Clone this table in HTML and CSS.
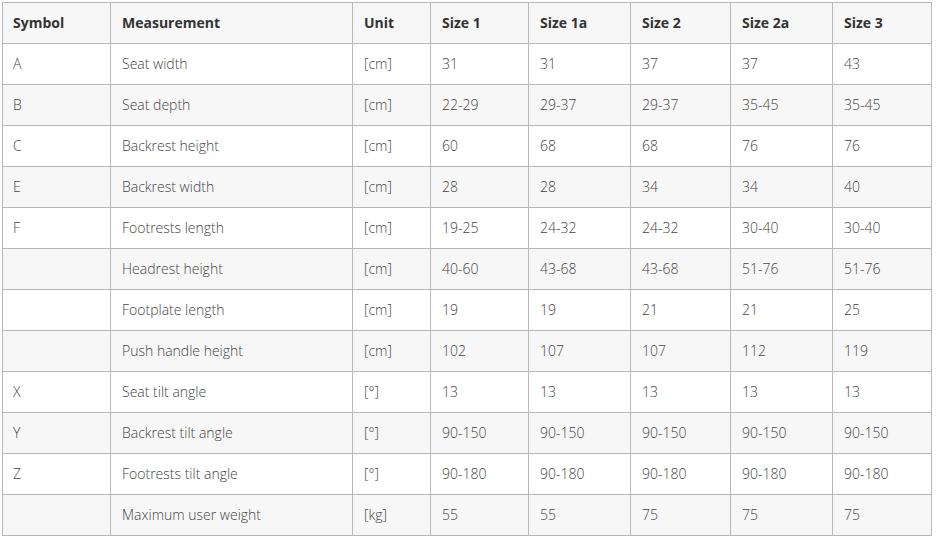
FILE: index.html
```html
<!DOCTYPE html>
<html>
<head>
<meta charset="utf-8">
<link rel="stylesheet" href="styles.css">
</head>
<body>
<table class="spec">
<colgroup>
<col class="c1"><col class="c2"><col class="c3"><col class="c4"><col class="c5"><col class="c6"><col class="c7"><col class="c8">
</colgroup>
<thead>
<tr><th>Symbol</th><th>Measurement</th><th>Unit</th><th>Size 1</th><th>Size 1a</th><th>Size 2</th><th>Size 2a</th><th>Size 3</th></tr>
</thead>
<tbody>
<tr><td>A</td><td>Seat width</td><td>[cm]</td><td>31</td><td>31</td><td>37</td><td>37</td><td>43</td></tr>
<tr><td>B</td><td>Seat depth</td><td>[cm]</td><td>22-29</td><td>29-37</td><td>29-37</td><td>35-45</td><td>35-45</td></tr>
<tr><td>C</td><td>Backrest height</td><td>[cm]</td><td>60</td><td>68</td><td>68</td><td>76</td><td>76</td></tr>
<tr><td>E</td><td>Backrest width</td><td>[cm]</td><td>28</td><td>28</td><td>34</td><td>34</td><td>40</td></tr>
<tr><td>F</td><td>Footrests length</td><td>[cm]</td><td>19-25</td><td>24-32</td><td>24-32</td><td>30-40</td><td>30-40</td></tr>
<tr><td></td><td>Headrest height</td><td>[cm]</td><td>40-60</td><td>43-68</td><td>43-68</td><td>51-76</td><td>51-76</td></tr>
<tr><td></td><td>Footplate length</td><td>[cm]</td><td>19</td><td>19</td><td>21</td><td>21</td><td>25</td></tr>
<tr><td></td><td>Push handle height</td><td>[cm]</td><td>102</td><td>107</td><td>107</td><td>112</td><td>119</td></tr>
<tr><td>X</td><td>Seat tilt angle</td><td>[°]</td><td>13</td><td>13</td><td>13</td><td>13</td><td>13</td></tr>
<tr><td>Y</td><td>Backrest tilt angle</td><td>[°]</td><td>90-150</td><td>90-150</td><td>90-150</td><td>90-150</td><td>90-150</td></tr>
<tr><td>Z</td><td>Footrests tilt angle</td><td>[°]</td><td>90-180</td><td>90-180</td><td>90-180</td><td>90-180</td><td>90-180</td></tr>
<tr><td></td><td>Maximum user weight</td><td>[kg]</td><td>55</td><td>55</td><td>75</td><td>75</td><td>75</td></tr>
</tbody>
</table>
</body>
</html>
```
FILE: styles.css
```css
html, body {
  margin: 0;
  padding: 0;
  background: #fff;
}
body {
  padding: 2px;
  font-family: "Open Sans", "Liberation Sans", sans-serif;
  font-size: 14px;
  font-weight: 300;
  color: #444;
}
.spec {
  border-collapse: collapse;
  table-layout: fixed;
  width: 930px;
}
.c1 { width: 108px; }
.c2 { width: 242px; }
.c3 { width: 78px; }
.c4 { width: 98px; }
.c5 { width: 102px; }
.c6 { width: 100px; }
.c7 { width: 102px; }
.c8 { width: 99px; }
.spec th, .spec td {
  border: 1px solid #b8b8b8;
  height: 38px;
  padding: 0 10px 2px 11px;
  text-align: left;
  vertical-align: middle;
}
.spec th:first-child, .spec td:first-child {
  padding-left: 10px;
}
.spec th {
  font-weight: bold;
  color: #333;
  font-size: 14px;
  background: #f7f7f7;
}
.spec tbody tr:nth-child(even) td {
  background: #f7f7f7;
}
```
